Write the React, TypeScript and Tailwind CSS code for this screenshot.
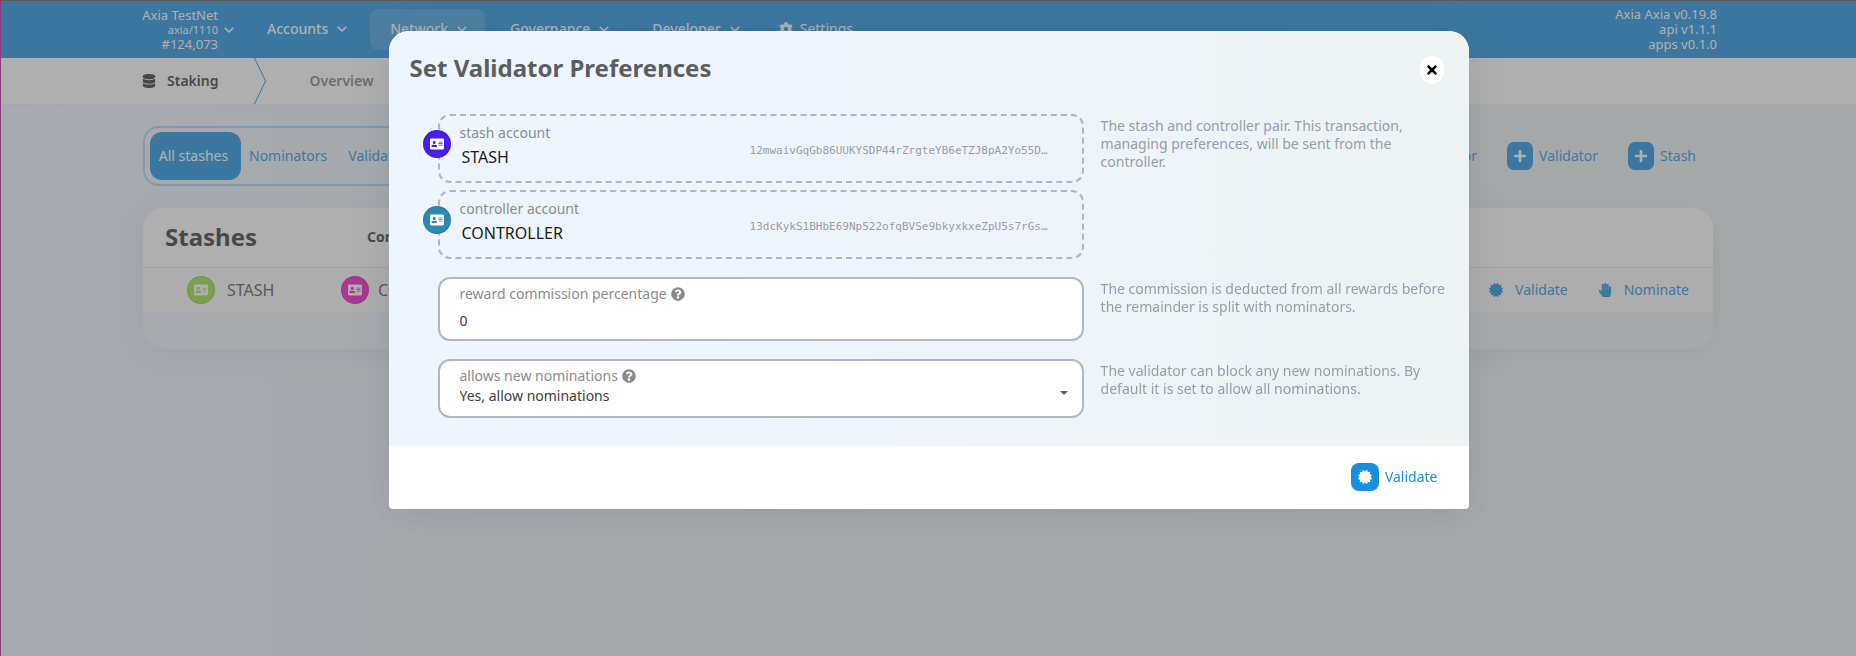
import { useState } from 'react';
import type { ReactNode } from 'react';
import {
  FaAddressCard,
  FaCertificate,
  FaCog,
  FaDatabase,
  FaHandPaper,
  FaPlus,
  FaQuestionCircle,
  FaTimes,
} from 'react-icons/fa';

function Badge({ color }: { color: string }) {
  return (
    <span className={`flex size-7 shrink-0 items-center justify-center rounded-full border border-black/10 text-white ${color}`}>
      <FaAddressCard size={14} />
    </span>
  );
}

function Chevron() {
  return (
    <svg className="size-[14px] shrink-0" viewBox="0 0 14 14" fill="none" stroke="currentColor" strokeWidth="1.6">
      <path d="M3.2 5.2L7 9l3.8-3.8" strokeLinecap="round" strokeLinejoin="round" />
    </svg>
  );
}

function MenuItem({ label, active = false }: { label: string; active?: boolean }) {
  return (
    <button
      type="button"
      className={`flex h-[41px] items-center gap-[7px] rounded-lg pr-4 pb-[2px] pl-5 text-sm font-medium ${active ? 'bg-white/15' : ''}`}
    >
      {label}
      <Chevron />
    </button>
  );
}

function ActionButton({ label }: { label: string }) {
  return (
    <button type="button" className="flex items-center gap-[6px] text-sm text-[#178fe1]">
      <span className="flex h-7 w-[26px] items-center justify-center rounded-[7px] bg-[#178fe1] text-white">
        <FaPlus size={14} />
      </span>
      {label}
    </button>
  );
}

function RowAction({ icon, label }: { icon: ReactNode; label: string }) {
  return (
    <button type="button" className="flex items-center gap-3 text-sm text-[#178fe1]">
      {icon}
      {label}
    </button>
  );
}

function AccountBox({ label, name, address, color }: { label: string; name: string; address: string; color: string }) {
  return (
    <div className="flex h-[69px] items-center rounded-xl border-2 border-dashed border-[#b1b5c7] pr-[34px]">
      <div className="-mt-[10px] -ml-[17px]">
        <Badge color={color} />
      </div>
      <div className="ml-[9px] flex-1 pb-1">
        <div className="text-sm leading-5 text-[#8b8c8f]">{label}</div>
        <div className="ml-[2px] text-base leading-7 text-[#1c1c1c]">{name}</div>
      </div>
      <div className="pt-1 font-['DejaVu_Sans_Mono',monospace] text-[11px] leading-4 text-[#9a9da3]">{address}</div>
    </div>
  );
}

function Help({ children }: { children: ReactNode }) {
  return <p className="pt-[3px] text-sm leading-[18px] text-[#979cb0]">{children}</p>;
}

function Page() {
  return (
    <>
      <header className="flex h-[58px] items-center border-t border-[#555] bg-[#178fe1] px-[139px] text-white">
        <button
          type="button"
          className="flex w-[97px] items-center justify-end gap-1 text-right text-[13px] leading-[14px] whitespace-nowrap"
        >
          <span>
            Axia TestNet
            <br />
            <span className="text-[11px]">axia/1110</span>
            <br />
            #124,073
          </span>
          <Chevron />
        </button>
        <nav className="ml-[11px] flex flex-1 items-center gap-[5px]">
          <MenuItem label="Accounts" />
          <MenuItem label="Network" active />
          <MenuItem label="Governance" />
          <MenuItem label="Developer" />
          <a href="#settings" className="flex items-center gap-[7px] px-4 pb-[2px] text-sm">
            <FaCog size={14} />
            Settings
          </a>
        </nav>
        <div className="text-right text-[13px] leading-[15px]">
          Axia Axia v0.19.8
          <br />
          api v1.1.1
          <br />
          apps v0.1.0
        </div>
      </header>

      <nav className="flex h-[47px] items-center border-b border-[#ececec] bg-white px-[142px] text-sm">
        <span className="flex items-center gap-[11px] pb-px font-semibold text-[#303030]">
          <FaDatabase size={14} />
          Staking
        </span>
        <svg className="ml-9 h-[46px] w-3" viewBox="0 0 12 46" fill="none" stroke="#178fe1" strokeWidth="1">
          <path d="M0.5 0 L11.5 23 L0.5 46" />
        </svg>
        <a href="#overview" className="ml-[43px] font-semibold text-[#7c7c7c]">
          Overview
        </a>
      </nav>

      <main className="px-[143px] pt-[21px]">
        <div className="flex items-center justify-between">
          <div className="flex h-[60px] items-center rounded-2xl border-2 border-[#a3d2f2] px-[5px] text-sm text-[#178fe1]">
            <button type="button" className="h-12 w-[91px] rounded-xl bg-[#178fe1] pr-1 text-white">
              All stashes
            </button>
            <button type="button" className="ml-2">
              Nominators
            </button>
            <button type="button" className="ml-[21px] pr-4">
              Validators
            </button>
          </div>
          <div className="flex gap-[30px] pr-[17px]">
            <ActionButton label="Nominator" />
            <ActionButton label="Validator" />
            <ActionButton label="Stash" />
          </div>
        </div>

        <div className="mt-[22px] overflow-hidden rounded-[20px] bg-white/10 pb-9 shadow-[0_4px_30px_rgba(70,90,120,0.12)]">
          <table className="w-full border-collapse text-left">
            <thead>
              <tr className="h-[59px] border-b border-[#e6e6e6] bg-white">
                <th className="w-[198px] pl-[22px] text-2xl font-bold text-[#303030]">Stashes</th>
                <th className="pl-[26px] text-sm font-bold text-[#303030]">Controller</th>
                <th />
              </tr>
            </thead>
            <tbody>
              <tr className="h-[45px] border-b border-[#efefef] bg-[#fafafa]">
                <td className="pl-11 text-base text-[#4e4e4e]">
                  <span className="flex items-center gap-3">
                    <Badge color="bg-[#93e03a]" />
                    STASH
                  </span>
                </td>
                <td className="text-base text-[#4e4e4e]">
                  <span className="flex items-center gap-[9px]">
                    <Badge color="bg-[#f70fc4]" />
                    CONTROLLER
                  </span>
                </td>
                <td className="pr-6">
                  <span className="flex justify-end gap-[30px]">
                    <RowAction icon={<FaCertificate size={14} />} label="Validate" />
                    <RowAction icon={<FaHandPaper size={14} />} label="Nominate" />
                  </span>
                </td>
              </tr>
            </tbody>
          </table>
        </div>
      </main>
    </>
  );
}

function PreferencesDialog() {
  const [commission, setCommission] = useState('0');
  const [nominations, setNominations] = useState('yes');
  return (
    <div
      role="dialog"
      aria-labelledby="dialog-title"
      className="w-full max-w-[1080px] rounded-t-[20px] rounded-b bg-white shadow-[0_6px_40px_rgba(60,75,100,0.15)]"
    >
      <div className="rounded-t-[20px] bg-linear-to-r from-[#eef5ff] via-[#eff4fb] to-[#edf3f3] pb-7">
        <div className="flex items-start justify-between pr-[25px] pl-[21px]">
          <h1 id="dialog-title" className="pt-[19px] text-2xl leading-9 font-bold text-[#5c5d60]">
            Set Validator Preferences
          </h1>
          <button
            type="button"
            aria-label="Close"
            className="mt-[25px] flex h-7 w-6 items-center justify-center rounded-full bg-white text-black"
          >
            <FaTimes size={14} />
          </button>
        </div>
        <div className="mt-7 grid grid-cols-[65fr_35fr] gap-x-[17px] gap-y-[18px] pr-5 pl-[49px]">
          <div className="flex flex-col gap-[7px]">
            <AccountBox
              label="stash account"
              name="STASH"
              address="12mwaivGqGb86UUKYSDP44rZrgteYB6eTZJ8pA2Yo55D…"
              color="bg-[#4a1ee8]"
            />
            <AccountBox
              label="controller account"
              name="CONTROLLER"
              address="13dcKykS1BHbE69Np522ofqBVSe9bkyxkxeZpU5s7rGs…"
              color="bg-[#2f88ad]"
            />
          </div>
          <Help>The stash and controller pair. This transaction, managing preferences, will be sent from the controller.</Help>

          <div className="h-16 rounded-xl border-2 border-[#b1b5c7] bg-white px-5 pt-[5px]">
            <label htmlFor="commission" className="flex items-center gap-1 text-sm leading-5 text-[#8b8b8b]">
              reward commission percentage
              <FaQuestionCircle size={14} />
            </label>
            <input
              id="commission"
              type="text"
              value={commission}
              onChange={(event) => setCommission(event.target.value)}
              className="mt-[7px] block w-full text-sm leading-5 text-[#404040] outline-none"
            />
          </div>
          <Help>The commission is deducted from all rewards before the remainder is split with nominators.</Help>

          <div className="relative h-[59px] rounded-xl border-2 border-[#b1b5c7] bg-white px-5 pt-[5px]">
            <label htmlFor="nominations" className="flex items-center gap-1 text-sm leading-5 text-[#8b8b8b]">
              allows new nominations
              <FaQuestionCircle size={14} />
            </label>
            <select
              id="nominations"
              value={nominations}
              onChange={(event) => setNominations(event.target.value)}
              className="block w-full appearance-none text-sm leading-5 text-[#404040] outline-none"
            >
              <option value="yes">Yes, allow nominations</option>
              <option value="no">No, block all nominations</option>
            </select>
            <svg className="pointer-events-none absolute right-[14px] bottom-[21px] h-1 w-2" viewBox="0 0 8 4" fill="#606060">
              <path d="M0 0h8L4 4z" />
            </svg>
          </div>
          <Help>The validator can block any new nominations. By default it is set to allow all nominations.</Help>
        </div>
      </div>
      <div className="flex h-[63px] items-center justify-end pr-[31px] pb-[2px]">
        <button type="button" className="flex items-center gap-[6px] text-sm text-[#178fe1]">
          <span className="flex size-7 items-center justify-center rounded-lg bg-[#178fe1] text-white">
            <FaCertificate size={14} />
          </span>
          Validate
        </button>
      </div>
    </div>
  );
}

export default function App() {
  return (
    <div className="min-h-screen bg-linear-to-r from-[#eef4fe] via-[#edf2f4] to-[#edf3f3] font-['Noto_Sans',sans-serif]">
      <Page />
      <div className="fixed inset-0 flex items-start justify-center overflow-auto border-l border-[#8a3d7c] bg-[#606060]/50 pt-[31px]">
        <PreferencesDialog />
      </div>
    </div>
  );
}
